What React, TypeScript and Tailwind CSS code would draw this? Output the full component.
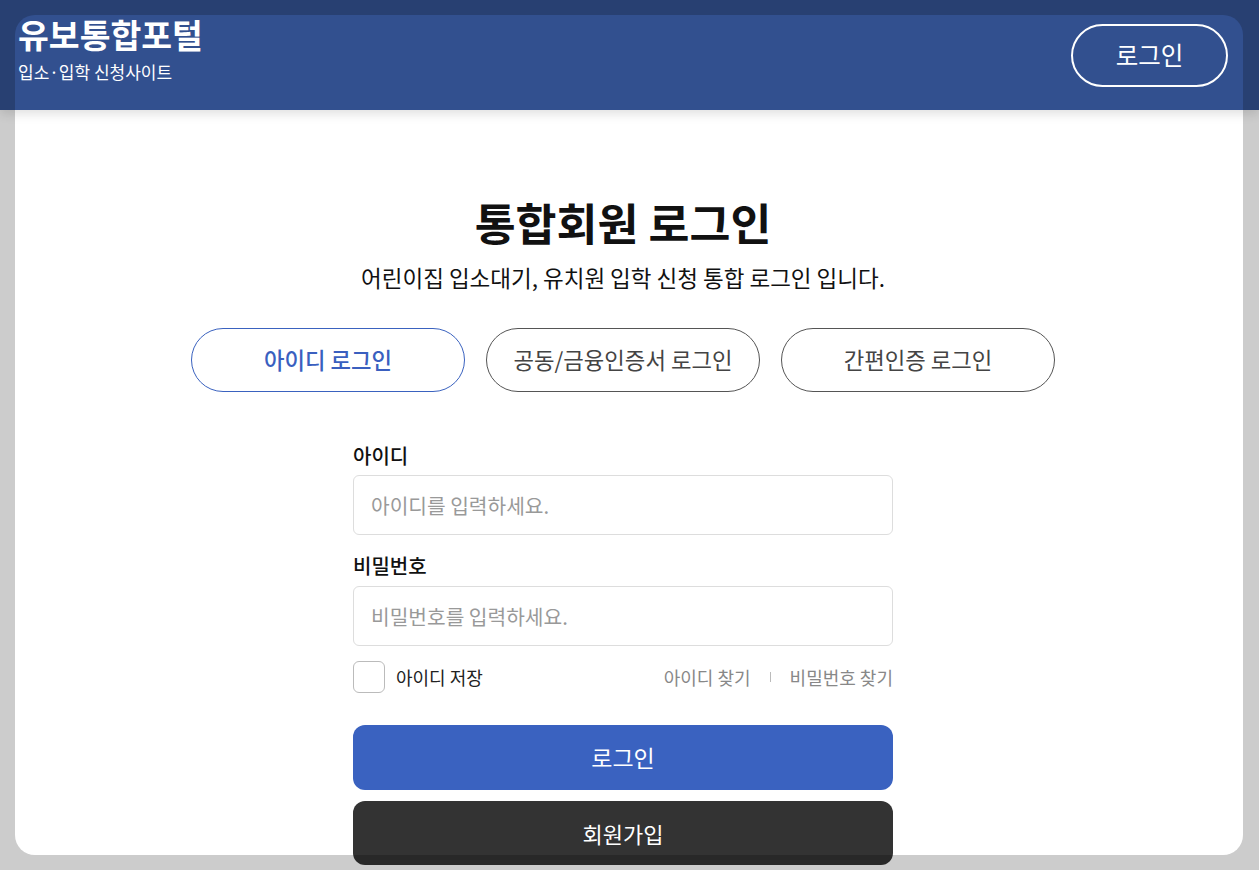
import React from "react";

export default function App() {
  const font = { fontFamily: '"Noto Sans CJK KR", "Noto Sans", sans-serif' };
  return (
    <div className="relative w-[1259px] h-[870px] overflow-hidden bg-white" style={font}>
      <header className="relative z-10 h-[110px] bg-[#32508f] shadow-[0_4px_10px_rgba(0,0,0,0.12)] flex items-start justify-between pl-[18px] pr-[31px]">
        <div className="pt-[12px]">
          <div className="text-[33.5px] font-bold text-white leading-[44px]">유보통합포털</div>
          <div className="text-[17px] text-white leading-[22px] mt-[5px]">입소·입학 신청사이트</div>
        </div>
        <button className="mt-[24px] w-[157px] h-[63px] rounded-full border-2 border-white text-white text-[24.5px] leading-none">
          로그인
        </button>
      </header>

      <main className="flex flex-col items-center pr-[13px]">
        <h1 className="mt-[86px] text-[44.5px] font-semibold leading-[52px] text-[#111]">통합회원 로그인</h1>
        <p className="mt-[14px] text-[22.5px] leading-[30px] text-[#111]">어린이집 입소대기, 유치원 입학 신청 통합 로그인 입니다.</p>

        <div className="mt-[36px] flex gap-[21px]">
          <button className="w-[274px] h-[64px] rounded-full border border-[#3a62bf] text-[#3a5fbf] text-[22.3px] font-medium">아이디 로그인</button>
          <button className="w-[274px] h-[64px] rounded-full border border-[#555] text-[#444] text-[22.3px]">공동/금융인증서 로그인</button>
          <button className="w-[274px] h-[64px] rounded-full border border-[#555] text-[#444] text-[22.3px]">간편인증 로그인</button>
        </div>

        <div className="mt-[51px] w-[540px] flex flex-col">
          <label className="text-[20px] font-medium leading-[26px] text-[#111] mb-[6px]">아이디</label>
          <input
            className="h-[60px] w-full rounded-[6px] border border-[#dddddd] px-[17px] text-[20.3px] placeholder:text-[#999] outline-none"
            placeholder="아이디를 입력하세요."
          />
          <label className="mt-[18px] text-[20px] font-medium leading-[26px] text-[#111] mb-[7px]">비밀번호</label>
          <input
            type="password"
            className="h-[60px] w-full rounded-[6px] border border-[#dddddd] px-[17px] text-[20.3px] placeholder:text-[#999] outline-none"
            placeholder="비밀번호를 입력하세요."
          />
          <div className="mt-[15px] flex items-center justify-between h-[32px]">
            <div className="flex items-center gap-[11px]">
              <span className="w-[32px] h-[32px] rounded-[6px] border border-[#bbb] bg-white" />
              <span className="text-[18px] text-[#222]">아이디 저장</span>
            </div>
            <div className="flex items-center text-[18px] text-[#888]">
              <span>아이디 찾기</span>
              <span className="mx-[19px] w-px h-[10px] bg-[#bbb]" />
              <span>비밀번호 찾기</span>
            </div>
          </div>
          <button className="mt-[32px] h-[65px] w-full rounded-[12px] bg-[#3a62c0] text-white text-[23px]">로그인</button>
          <button className="mt-[11px] h-[64px] w-full rounded-[12px] bg-[#333333] text-white text-[22px]">회원가입</button>
        </div>
      </main>

      <div className="pointer-events-none absolute z-20 left-[15px] top-[15px] right-[16px] bottom-[15px] rounded-[20px] shadow-[0_0_0_2000px_rgba(0,0,0,0.2)]" />
    </div>
  );
}
